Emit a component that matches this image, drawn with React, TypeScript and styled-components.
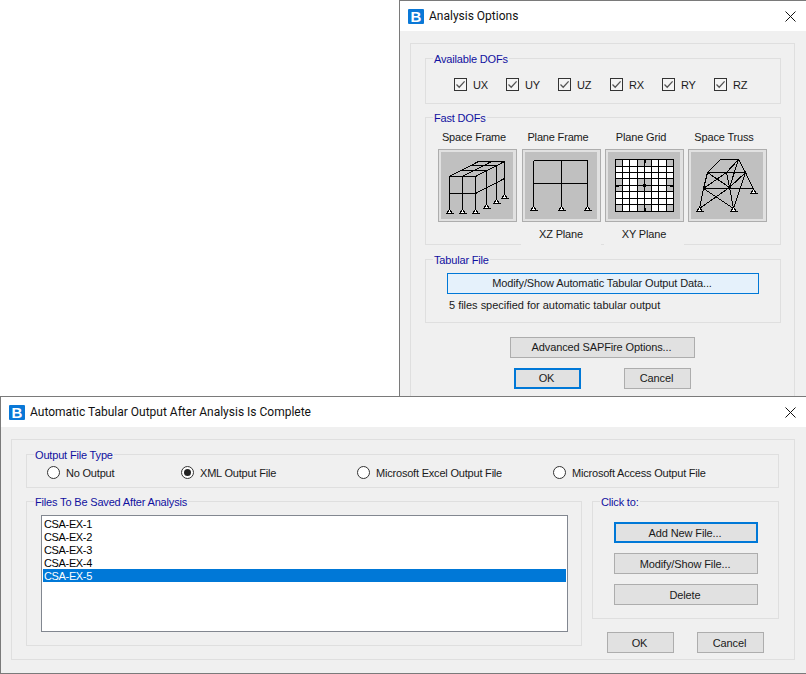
import React from 'react';
import styled, { createGlobalStyle } from 'styled-components';

const Global = createGlobalStyle`
  html, body { margin: 0; padding: 0; background: #fff; }
  * { box-sizing: border-box; }
`;

const Desktop = styled.div`
  position: relative;
  width: 806px;
  height: 674px;
  overflow: hidden;
  font-family: "Liberation Sans", Arial, sans-serif;
  font-size: 11px;
  line-height: 14px;
  letter-spacing: -0.17px;
  color: #1a1a1a;
`;

const Win = styled.section<{ $left: number; $top: number; $height: number }>`
  position: absolute;
  left: ${p => p.$left}px;
  top: ${p => p.$top}px;
  width: ${p => 806 - p.$left}px;
  height: ${p => p.$height}px;
  display: flex;
  flex-direction: column;
  background: #f0f0f0;
  border: 1px solid #7a7a7a;
  border-right: none;
`;

const TitleBar = styled.header`
  flex: none;
  height: 30px;
  display: flex;
  align-items: center;
  background: #fff;
  padding: 0 9px 0 8px;
`;

const Logo = styled.span`
  flex: none;
  width: 16px;
  height: 15px;
  margin-right: 5px;
  display: flex;
  align-items: center;
  justify-content: center;
  background: #0a78d7;
  border-radius: 1px;
  color: #fff;
  font-family: "Liberation Sans", Arial, sans-serif;
  font-weight: 700;
  font-size: 15px;
  line-height: 15px;
  letter-spacing: 0;
`;

const Title = styled.h1`
  margin: 0;
  flex: 1;
  font-family: Roboto, "Noto Sans", sans-serif;
  font-weight: 400;
  font-size: 12px;
  line-height: 16px;
  letter-spacing: 0;
  color: #111;
`;

const Close = styled.svg`
  flex: none;
  width: 11px;
  height: 11px;
  margin-right: 1px;
`;

const Body = styled.div`
  flex: 1;
  padding: 12px 11px 13px 10px;
  min-height: 0;
`;

const Panel = styled.div<{ $open?: boolean }>`
  height: ${p => (p.$open ? '400px' : '100%')};
  border: 1px solid #dfdfdf;
  padding: 14px;
`;

const Group = styled.div<{ $w?: number; $h: number }>`
  width: ${p => (p.$w ? `${p.$w}px` : '100%')};
  height: ${p => p.$h}px;
  border: 1px solid #dfdfdf;
`;

const Legend = styled.div`
  width: fit-content;
  height: 14px;
  margin: -7px 0 0 7px;
  padding: 0 1px;
  background: #f0f0f0;
  color: #1010a0;
  white-space: nowrap;
`;

const CheckRow = styled.div`
  display: flex;
  padding: 12px 0 0 28px;
`;

const CheckItem = styled.label`
  width: 52px;
  height: 13px;
  display: flex;
  align-items: center;
  gap: 6px;
`;

const CheckBox = styled.span`
  flex: none;
  width: 13px;
  height: 13px;
  display: flex;
  background: #f4f4f4;
  border: 1px solid #333;
`;

const FastGrid = styled.div`
  display: grid;
  grid-template-columns: 84px 83px 83px 79px;
  margin: 5px 0 0 12px;
`;

const FastCell = styled.div`
  display: flex;
  flex-direction: column;
  align-items: flex-start;
`;

const FastLabel = styled.div`
  width: 79px;
  height: 14px;
  padding-right: 7px;
  margin-bottom: 5px;
  text-align: center;
  white-space: nowrap;
`;

const FastButton = styled.button`
  width: 79px;
  height: 73px;
  padding: 2px 3px 2px 2px;
  border: 1px solid #adadad;
  background: #e1e1e1;
  display: block;
`;

const Drawing = styled.svg`
  display: block;
  width: 72px;
  height: 67px;
  background: #c0c0c0;
  shape-rendering: crispEdges;
`;

const PlaneLabel = styled.div`
  width: 80px;
  height: 20px;
  margin: 4px 0 0 -1px;
  padding-bottom: 4px;
  background: #f0f0f0;
  line-height: 16px;
  text-align: center;
`;

const Btn = styled.button<{ $w: number; $focus?: boolean; $hot?: boolean; $lift?: boolean }>`
  display: block;
  flex: none;
  width: ${p => p.$w}px;
  height: 21px;
  padding: 0 2px ${p => (p.$lift ? '2px' : '0')} 0;
  font: inherit;
  letter-spacing: -0.12px;
  color: inherit;
  background: ${p => (p.$hot ? '#e5f1fb' : '#e1e1e1')};
  border: ${p => (p.$focus ? '2px solid #0078d7' : p.$hot ? '1px solid #0078d7' : '1px solid #adadad')};
`;

const TabularButtonSlot = styled.div`
  margin: 6px 0 0 21px;
`;

const Note = styled.div`
  margin: 4px 0 0 23px;
  letter-spacing: -0.02px;
`;

const Advanced = styled.div`
  margin: 14px 0 0 85px;
`;

const DialogButtons = styled.div<{ $gap: number; $left: number; $top: number }>`
  display: flex;
  gap: ${p => p.$gap}px;
  margin: ${p => p.$top}px 0 0 ${p => p.$left}px;
`;

const Spaced = styled.div<{ $top: number }>`
  margin-top: ${p => p.$top}px;
`;

const RadioRow = styled.div`
  display: grid;
  grid-template-columns: 134px 176px 196px auto;
  margin: 4px 0 0 20px;
  letter-spacing: -0.2px;
`;

const RadioItem = styled.label`
  display: flex;
  align-items: center;
  gap: 6px;
  height: 13px;
  white-space: nowrap;
`;

const RadioDot = styled.span<{ $on?: boolean }>`
  flex: none;
  position: relative;
  width: 13px;
  height: 13px;
  border-radius: 50%;
  border: 1px solid #333;
  background: #fff;
  &::after {
    content: '';
    display: ${p => (p.$on ? 'block' : 'none')};
    position: absolute;
    left: 2px;
    top: 2px;
    width: 7px;
    height: 7px;
    border-radius: 50%;
    background: #222;
  }
`;

const Columns = styled.div`
  display: flex;
  gap: 10px;
  margin-top: 13px;
`;

const RightCol = styled.div`
  flex: none;
  width: 187px;
`;

const List = styled.ul`
  list-style: none;
  width: 527px;
  height: 117px;
  margin: 6px 0 0 14px;
  padding: 1px;
  background: #fff;
  border: 1px solid #828790;
`;

const ListRow = styled.li<{ $sel?: boolean }>`
  height: 13px;
  line-height: 14px;
  padding-left: 1px;
  letter-spacing: -0.35px;
  background: ${p => (p.$sel ? '#0078d7' : 'transparent')};
  color: ${p => (p.$sel ? '#fff' : '#000')};
`;

const ClickStack = styled.div`
  display: flex;
  flex-direction: column;
  gap: 10px;
  margin: 13px 0 0 21px;
`;

const X = () => (
  <Close viewBox="0 0 11 11">
    <path d="M0.5 0.5 L10.5 10.5 M10.5 0.5 L0.5 10.5" stroke="#111" strokeWidth="1" fill="none" />
  </Close>
);

const Check = () => (
  <svg width="11" height="11" viewBox="0 0 11 11">
    <path d="M1.5 5.5 L4.2 8.2 L9.6 2.4" stroke="#555" strokeWidth="1.3" fill="none" />
  </svg>
);

const Support = ({ x, y }: { x: number; y: number }) => (
  <g>
    <path d={`M${x} ${y} L${x + 3} ${y + 4} H${x - 3} Z`} fill="#fff" stroke="#000" strokeWidth="1" />
    <path d={`M${x - 4} ${y + 4} H${x + 4}`} stroke="#000" strokeWidth="1" />
  </g>
);

const lineStyle = { stroke: '#000', strokeWidth: 1, fill: 'none' };

const SpaceFrame = () => (
  <Drawing viewBox="0 0 72 67">
    <path
      {...lineStyle}
      d="M8.5 24.5 H34.5 M8.5 41.5 H34.5 M8.5 24.5 V57.5 M21.5 24.5 V57.5 M34.5 24.5 V57.5
         M8.5 24.5 L37.5 9.5 H63.5 V42.5 M21.5 24.5 L50.5 9.5 M34.5 24.5 L63.5 9.5
         M19.5 18.5 H45.5 M30.5 13.5 H55.5 M45.5 18.5 V52.5 M55.5 13.5 V47.5 M34.5 41.5 L63.5 26.5"
    />
    {[[8.5, 57.5], [21.5, 57.5], [34.5, 57.5], [45.5, 52.5], [55.5, 47.5], [63.5, 42.5]].map(([x, y]) => (
      <Support key={x} x={x} y={y} />
    ))}
  </Drawing>
);

const PlaneFrame = () => (
  <Drawing viewBox="0 0 72 67">
    <path {...lineStyle} d="M8.5 8.5 H62.5 M8.5 31.5 H62.5 M8.5 8.5 V55.5 M36.5 8.5 V55.5 M62.5 8.5 V55.5" />
    {[8.5, 36.5, 62.5].map(x => (
      <Support key={x} x={x} y={54.5} />
    ))}
  </Drawing>
);

const gridX = [7.5, 14.5, 21.5, 29.5, 36.5, 43.5, 50.5, 58.5, 65.5];
const gridY = [7.5, 14.5, 20.5, 26.5, 33.5, 39.5, 46.5, 52.5, 59.5];
const grayCols = [0, 3, 4, 7];
const grayRows = [0, 3, 4, 7];

const PlaneGrid = () => (
  <Drawing viewBox="0 0 72 67">
    {gridY.slice(0, 8).flatMap((y, r) =>
      gridX.slice(0, 8).map((x, c) => (
        <rect
          key={`${r}-${c}`}
          x={x}
          y={y}
          width={gridX[c + 1] - x}
          height={gridY[r + 1] - y}
          fill={grayRows.includes(r) && grayCols.includes(c) ? '#c0c0c0' : '#fff'}
          stroke="#000"
          strokeWidth="1"
        />
      ))
    )}
    <rect x="35" y="32" width="3" height="3" fill="#000" />
    <rect x="36" y="7" width="2" height="4" fill="#000" />
    <rect x="36" y="56" width="2" height="4" fill="#000" />
    <rect x="7" y="33" width="4" height="2" fill="#000" />
    <rect x="62" y="33" width="4" height="2" fill="#000" />
  </Drawing>
);

const SpaceTruss = () => (
  <Drawing viewBox="0 0 72 67">
    <path
      {...lineStyle}
      d="M29.5 7.5 H47.5 M29.5 7.5 L16.5 20.5 M47.5 7.5 L35.5 20.5 M47.5 7.5 L54.5 20.5 M16.5 20.5 H54.5
         M12.5 36.5 H62.5 M16.5 20.5 L12.5 36.5 M35.5 20.5 L38.5 35.5 M54.5 20.5 L62.5 37.5
         M16.5 20.5 L38.5 35.5 M35.5 20.5 L12.5 36.5 M54.5 20.5 L38.5 35.5 M47.5 7.5 L38.5 35.5
         M54.5 20.5 L42.5 56.5 M12.5 36.5 L8.5 56.5 M38.5 35.5 L42.5 56.5
         M38.5 35.5 L8.5 56.5 M12.5 36.5 L42.5 56.5"
    />
    <rect x="37" y="34" width="3" height="3" fill="#000" />
    {[[8.5, 55.5], [42.5, 55.5], [62.5, 37.5]].map(([x, y]) => (
      <Support key={x} x={x} y={y} />
    ))}
  </Drawing>
);

const dofs = ['UX', 'UY', 'UZ', 'RX', 'RY', 'RZ'];
const files = ['CSA-EX-1', 'CSA-EX-2', 'CSA-EX-3', 'CSA-EX-4', 'CSA-EX-5'];

export default function App() {
  return (
    <Desktop>
      <Global />
      <Win $left={399} $top={0} $height={397}>
        <TitleBar>
          <Logo>B</Logo>
          <Title>Analysis Options</Title>
          <X />
        </TitleBar>
        <Body>
          <Panel $open>
            <Group $w={356} $h={46}>
              <Legend>Available DOFs</Legend>
              <CheckRow>
                {dofs.map(d => (
                  <CheckItem key={d}>
                    <CheckBox>
                      <Check />
                    </CheckBox>
                    {d}
                  </CheckItem>
                ))}
              </CheckRow>
            </Group>
            <Spaced $top={13}>
              <Group $w={356} $h={128}>
                <Legend>Fast DOFs</Legend>
                <FastGrid>
                  <FastCell>
                    <FastLabel>Space Frame</FastLabel>
                    <FastButton><SpaceFrame /></FastButton>
                  </FastCell>
                  <FastCell>
                    <FastLabel>Plane Frame</FastLabel>
                    <FastButton><PlaneFrame /></FastButton>
                    <PlaneLabel>XZ Plane</PlaneLabel>
                  </FastCell>
                  <FastCell>
                    <FastLabel>Plane Grid</FastLabel>
                    <FastButton><PlaneGrid /></FastButton>
                    <PlaneLabel>XY Plane</PlaneLabel>
                  </FastCell>
                  <FastCell>
                    <FastLabel>Space Truss</FastLabel>
                    <FastButton><SpaceTruss /></FastButton>
                  </FastCell>
                </FastGrid>
              </Group>
            </Spaced>
            <Spaced $top={14}>
              <Group $w={356} $h={64}>
                <Legend>Tabular File</Legend>
                <TabularButtonSlot>
                  <Btn $w={312} $hot $lift>Modify/Show Automatic Tabular Output Data...</Btn>
                </TabularButtonSlot>
                <Note>5 files specified for automatic tabular output</Note>
              </Group>
            </Spaced>
            <Advanced>
              <Btn $w={185} $lift>Advanced SAPFire Options...</Btn>
            </Advanced>
            <DialogButtons $gap={43} $left={89} $top={10}>
              <Btn $w={67} $focus $lift>OK</Btn>
              <Btn $w={67} $lift>Cancel</Btn>
            </DialogButtons>
          </Panel>
        </Body>
      </Win>

      <Win $left={0} $top={396} $height={278}>
        <TitleBar>
          <Logo>B</Logo>
          <Title>Automatic Tabular Output After Analysis Is Complete</Title>
          <X />
        </TitleBar>
        <Body>
          <Panel>
            <Group $w={753} $h={34}>
              <Legend>Output File Type</Legend>
              <RadioRow>
                <RadioItem><RadioDot />No Output</RadioItem>
                <RadioItem><RadioDot $on />XML Output File</RadioItem>
                <RadioItem><RadioDot />Microsoft Excel Output File</RadioItem>
                <RadioItem><RadioDot />Microsoft Access Output File</RadioItem>
              </RadioRow>
            </Group>
            <Columns>
              <Group $w={556} $h={145}>
                <Legend>Files To Be Saved After Analysis</Legend>
                <List>
                  {files.map((f, i) => (
                    <ListRow key={f} $sel={i === 4}>{f}</ListRow>
                  ))}
                </List>
              </Group>
              <RightCol>
                <Group $h={118}>
                  <Legend>Click to:</Legend>
                  <ClickStack>
                    <Btn $w={144} $focus>Add New File...</Btn>
                    <Btn $w={144}>Modify/Show File...</Btn>
                    <Btn $w={144}>Delete</Btn>
                  </ClickStack>
                </Group>
                <DialogButtons $gap={23} $left={15} $top={13}>
                  <Btn $w={67}>OK</Btn>
                  <Btn $w={67}>Cancel</Btn>
                </DialogButtons>
              </RightCol>
            </Columns>
          </Panel>
        </Body>
      </Win>
    </Desktop>
  );
}
